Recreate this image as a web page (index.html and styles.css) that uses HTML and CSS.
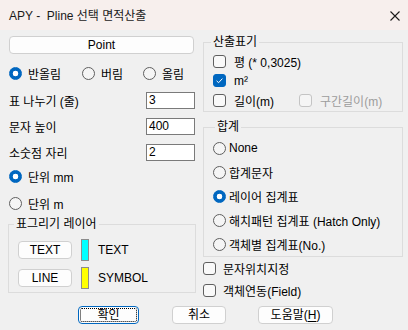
FILE: index.html
```html
<!DOCTYPE html>
<html lang="ko">
<head>
    <meta charset="UTF-8">
    <title>APY - Pline 선택 면적산출</title>
    <link rel="stylesheet" href="styles.css">
</head>
<body>
    <div class="titlebar">
        <span class="title">APY -&nbsp; Pline 선택 면적산출</span>
        <svg class="close" width="10" height="10" viewBox="0 0 10 10">
            <path d="M0.5 0.5 L9.5 9.5 M9.5 0.5 L0.5 9.5" stroke="#1a1a1a" stroke-width="1.1" fill="none"/>
        </svg>
    </div>

    <div class="content">
        <!--왼쪽-->
        <div class="left">
            <div class="btn point">Point</div>

            <div class="round-row">
                <span class="opt r1"><span class="radio on"></span>반올림</span>
                <span class="opt r2"><span class="radio"></span>버림</span>
                <span class="opt r3"><span class="radio"></span>올림</span>
            </div>

            <div class="field first"><span>표 나누기 (줄)</span><span class="input">3</span></div>
            <div class="field"><span>문자 높이</span><span class="input">400</span></div>
            <div class="field"><span>소숫점 자리</span><span class="input">2</span></div>

            <div class="opt unit-mm"><span class="radio on"></span>단위 mm</div>
            <div class="opt unit-m"><span class="radio"></span>단위 m</div>

            <fieldset class="group layer">
                <legend>표그리기 레이어</legend>
                <div class="layer-row first">
                    <span class="btn small">TEXT</span>
                    <span class="swatch cyan"></span>
                    <span>TEXT</span>
                </div>
                <div class="layer-row">
                    <span class="btn small">LINE</span>
                    <span class="swatch yellow"></span>
                    <span>SYMBOL</span>
                </div>
            </fieldset>
        </div>

        <!--오른쪽-->
        <div class="right">
            <fieldset class="group calc">
                <legend>산출표기</legend>
                <div class="check-row c1"><span class="check"></span>평 (* 0,3025)</div>
                <div class="check-row"><span class="check on"><svg width="13" height="13" viewBox="0 0 13 13"><path d="M3.6 6.8 L5.6 8.7 L9.4 4.6" stroke="#fff" stroke-width="1" fill="none"/></svg></span>m²</div>
                <div class="check-row c3">
                    <span class="len"><span class="check"></span>길이(m)</span>
                    <span class="disabled"><span class="check off"></span>구간길이(m)</span>
                </div>
            </fieldset>

            <fieldset class="group sum">
                <legend>합계</legend>
                <div class="sum-row first"><span class="radio"></span>None</div>
                <div class="sum-row"><span class="radio"></span>합계문자</div>
                <div class="sum-row"><span class="radio on"></span>레이어 집계표</div>
                <div class="sum-row"><span class="radio"></span>해치패턴 집계표 (Hatch Only)</div>
                <div class="sum-row"><span class="radio"></span>객체별 집계표(No.)</div>
            </fieldset>

            <div class="out-row"><span class="check"></span>문자위치지정</div>
            <div class="out-row"><span class="check"></span>객체연동(Field)</div>
        </div>
    </div>

    <div class="buttons">
        <span class="btn ok">확인</span>
        <span class="btn cancel">취소</span>
        <span class="btn help">도움말(<u>H</u>)</span>
    </div>
</body>
</html>
```

FILE: styles.css
```css
html,body{margin:0;padding:0;}
body{
    width:408px;
    height:330px;
    overflow:hidden;
    background:#f0f0f0;
    font-family:"Liberation Sans","Noto Sans CJK KR",sans-serif;
    font-size:12px;
    color:#000;
}

.titlebar{height:30px;background:#f7efed;display:flex;align-items:center;justify-content:space-between;padding:0 8px 0 9px;}
.title{font-size:12px;color:#1a1a1a;line-height:30px;padding-top:1px;}
.close{margin-top:1px;}

.content{display:flex;align-items:flex-start;}
.left{width:188px;margin-left:8px;display:flex;flex-direction:column;}
.right{width:200px;margin-left:7px;display:flex;flex-direction:column;}

.btn{box-sizing:border-box;background:#fdfdfd;border:1px solid #d0d0d0;border-radius:4px;display:flex;align-items:center;justify-content:center;line-height:14px;}
.point{height:18px;margin:6px 2px 0 1px;}

.opt{display:flex;align-items:center;height:14px;}
.radio{box-sizing:border-box;width:13px;height:13px;border-radius:50%;border:1px solid #5f5f5f;background:#f5f5f5;flex:none;}
.radio.on{border-color:#0067c0;background:radial-gradient(circle,#fff 0 2.6px,#0067c0 3.1px);}

.round-row{display:flex;align-items:center;height:18px;margin-top:10px;padding-left:1px;}
.round-row .radio{margin-right:6px;}
.r1{width:73px;}
.r2{width:61px;}
.r2 .radio{margin-right:6px;}
.r3 .radio{margin-right:7px;}

.field{display:flex;justify-content:space-between;align-items:center;height:17px;margin-top:9px;padding-left:1px;}
.field.first{margin-top:10px;}
.input{box-sizing:border-box;width:49px;height:17px;background:#fff;border:1px solid #7a7a7a;padding-left:2px;line-height:15px;margin-right:1px;}

.unit-mm{margin-top:8px;padding-left:1px;}
.unit-m{margin-top:13px;padding-left:1px;}
.opt .radio{margin-right:6px;}

.group{margin:0;border:1px solid #dcdcdc;padding:0;min-width:0;}
.group legend{line-height:14px;padding:0 2px;}
.layer{margin-top:7px;padding-bottom:3px;}
.layer legend{margin-left:5px;}
.layer-row{display:flex;align-items:center;height:22px;margin-top:6px;padding-left:9px;}
.layer-row.first{margin-top:8px;}
.btn.small{width:54px;height:18px;}
.swatch{box-sizing:border-box;width:8px;height:22px;border:1px solid #8c8c8c;margin:0 9px 0 9px;}
.cyan{background:#00ffff;}
.yellow{background:#ffff00;}

.calc{margin-top:5px;padding-bottom:1px;}
.calc legend{margin-left:7px;}
.check-row{display:flex;align-items:center;height:19px;padding-left:9px;}
.check-row.c1{margin-top:3px;}
.check-row.c3{margin-top:1px;}
.check{box-sizing:border-box;width:13px;height:13px;border:1px solid #5f5f5f;border-radius:3px;background:#f9f9f9;flex:none;display:flex;}
.check.on{background:#0067c0;border-color:#0067c0;}
.check.on svg{margin:-1px;}
.check.off{border-color:#c4c4c4;background:#f5f5f5;}
.check-row .check{margin-right:8px;}
.len{display:flex;align-items:center;width:86px;}
.len .check{margin-right:8px;}
.disabled{display:flex;align-items:center;color:#9d9d9d;}
.disabled .check{margin-right:8px;}

.sum{margin-top:8px;}
.sum legend{margin-left:11px;}
.sum-row{display:flex;align-items:center;height:24px;padding-left:9px;}
.sum-row.first{margin-top:2px;}
.sum-row .radio{margin-right:3px;}

.out-row{display:flex;align-items:center;height:22px;}
.out-row .check{margin-right:7px;}

.buttons{display:flex;margin-top:5px;padding-left:78px;}
.buttons .btn{height:18px;}
.ok{width:61px;border-color:#0067c0;outline:1px dotted #000;outline-offset:-3px;}
.cancel{width:54px;margin-left:33px;}
.help{width:75px;margin-left:32px;}
.help u{text-decoration-thickness:1px;text-underline-offset:2px;}
```
